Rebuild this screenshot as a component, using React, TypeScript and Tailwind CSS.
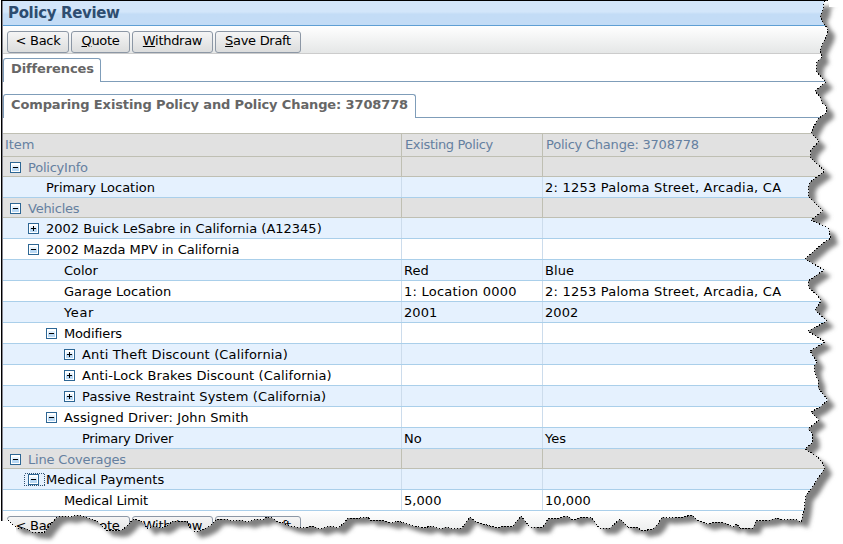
import React from "react";

type Row = {
  label: string;
  level: number;
  toggle?: "plus" | "minus";
  group?: boolean;
  focused?: boolean;
  shade?: boolean;
  before?: string;
  after?: string;
  spacing?: string;
};

const rows: Row[] = [
  { label: "PolicyInfo", level: 0, toggle: "minus", group: true, spacing: "tracking-[-0.22px]" },
  { label: "Primary Location", level: 1, shade: true, after: "2: 1253 Paloma Street, Arcadia, CA" },
  { label: "Vehicles", level: 0, toggle: "minus", group: true, spacing: "tracking-[-0.25px]" },
  { label: "2002 Buick LeSabre in California (A12345)", level: 1, toggle: "plus", shade: true, spacing: "tracking-[0px]" },
  { label: "2002 Mazda MPV in California", level: 1, toggle: "minus", spacing: "tracking-[0px]" },
  { label: "Color", level: 2, shade: true, before: "Red", after: "Blue" },
  { label: "Garage Location", level: 2, before: "1: Location 0000", after: "2: 1253 Paloma Street, Arcadia, CA", spacing: "tracking-[0.04px]" },
  { label: "Year", level: 2, shade: true, before: "2001", after: "2002", spacing: "tracking-[0.6px]" },
  { label: "Modifiers", level: 2, toggle: "minus", spacing: "tracking-[-0.15px]" },
  { label: "Anti Theft Discount (California)", level: 3, toggle: "plus", shade: true, spacing: "tracking-[0.16px]" },
  { label: "Anti-Lock Brakes Discount (California)", level: 3, toggle: "plus", spacing: "tracking-[0.11px]" },
  { label: "Passive Restraint System (California)", level: 3, toggle: "plus", shade: true, spacing: "tracking-[0.13px]" },
  { label: "Assigned Driver: John Smith", level: 2, toggle: "minus", spacing: "tracking-[0.12px]" },
  { label: "Primary Driver", level: 3, shade: true, before: "No", after: "Yes", spacing: "tracking-[-0.24px]" },
  { label: "Line Coverages", level: 0, toggle: "minus", group: true, spacing: "tracking-[-0.17px]" },
  { label: "Medical Payments", level: 1, toggle: "minus", shade: true, focused: true, spacing: "tracking-[0.04px]" },
  { label: "Medical Limit", level: 2, before: "5,000", after: "10,000", spacing: "tracking-[-0.18px]" },
];

const indents = ["pl-[7px]", "pl-[25px]", "pl-[43px]", "pl-[61px]"];

function Toggle({ kind }: { kind: "plus" | "minus" }) {
  return (
    <svg width="11" height="11" viewBox="0 0 11 11" shapeRendering="crispEdges" className="block">
      <rect width="11" height="11" fill="#2d6694" />
      <rect x="1" y="1" width="9" height="9" fill="#ffffff" />
      <rect x="2" y="5" width="7" height="4" fill="#b9d9f5" />
      <rect x="2" y="3" width="7" height="2" fill="#e3f1fd" />
      <rect x="3" y="5" width="5" height="1" fill="#000000" />
      {kind === "plus" && <rect x="5" y="3" width="1" height="5" fill="#000000" />}
    </svg>
  );
}

function Toolbar() {
  const button =
    "h-[22px] shrink-0 rounded-[3px] border border-[#8c97a5] bg-linear-to-b from-[#f5f5f5] to-[#dcdddd] pb-[3px] text-center leading-[17px] tracking-[-0.3px] text-black";
  return (
    <div className="flex h-7 shrink-0 gap-0.5 border-b border-[#cccccc] bg-linear-to-b from-white to-[#e5e7e7] pt-[5px] pl-1">
      <button className={`${button} w-[62px]`}>&lt; Back</button>
      <button className={`${button} w-[59px]`}><u>Q</u>uote</button>
      <button className={`${button} w-[81px]`}><u>W</u>ithdraw</button>
      <button className={`${button} w-[86px]`}><u>S</u>ave Draft</button>
    </div>
  );
}

function Tab({ label, width }: { label: string; width: string }) {
  return (
    <div className="flex h-6 shrink-0">
      <div className={`${width} shrink-0 rounded-t-[3px] border-t border-r border-l border-[#7f9db9] pl-[7px] text-[13px] leading-5 font-bold tracking-[-0.12px] text-[#666666]`}>
        {label}
      </div>
      <div className="grow border-b border-[#7f9db9]" />
    </div>
  );
}

function TableRow({ row }: { row: Row }) {
  const look = row.group
    ? "h-5 border-[#bfbfb3] bg-[#e1e1e1] text-[#6580a0]"
    : `h-[21px] border-[#aacfea] text-black ${row.shade ? "bg-[#e5f1fe]" : "bg-white"}`;
  const divider = row.group ? "border-[#bfbfb3]" : "border-[#ccdcec]";
  const valueSpacing = (text?: string) => (text && text.length > 8 ? "tracking-[0.23px]" : "tracking-[0.05px]");
  return (
    <div className={`grid shrink-0 grid-cols-[398px_141px_1fr] grid-rows-1 border-b leading-[22px] ${look}`}>
      <div className={`flex items-start ${indents[row.level]}`}>
        <span className="relative mt-[5px] mr-[7px] h-[11px] w-[11px]">
          {row.toggle && <Toggle kind={row.toggle} />}
          {row.focused && (
            <svg className="absolute -top-px -left-1" width="21" height="13" shapeRendering="crispEdges">
              <rect x="0.5" y="0.5" width="20" height="12" fill="none" stroke="#2d4f70" strokeDasharray="1 1" />
            </svg>
          )}
        </span>
        <span className={row.spacing ?? ""}>{row.label}</span>
      </div>
      <div className={`border-l pl-0.5 ${divider} ${valueSpacing(row.before)}`}>{row.before}</div>
      <div className={`border-l pl-0.5 ${divider} ${valueSpacing(row.after)}`}>{row.after}</div>
    </div>
  );
}

const rightEdge =
  "828,0 824,2 823,10 820,16 823,23 828,29 827,35 823,43 820,50 822,57 817,62 816,71 822,78 826,82 815,91 820,97 822,103 826,106 827,112 818,119 813,128 811,133 819,141 811,150 810,157 815,162 825,171 810,182 808,188 809,191 808,196 815,203 823,211 811,220 828,228 831,238 823,243 805,259 824,270 808,281 809,288 818,296 821,301 815,310 827,321 808,331 825,342 810,351 817,362 814,366 815,373 818,380 818,388 828,400 820,407 811,412 819,420 808,429 812,433 813,442 805,449 813,454 820,459 825,468 818,478 812,488 806,495 804,510 801,522";
const bottomEdge =
  "797,520 792,519 784,520 777,518 770,520 756,521 753,528 740,528 737,524 733,527 725,523 717,522 707,524 697,520 692,515 683,517 667,518 662,517 658,524 653,529 642,531 637,527 628,527 620,519 610,528 599,528 592,518 582,517 573,520 567,516 560,518 548,519 543,527 530,527 521,516 512,527 504,526 497,528 487,525 476,522 470,517 462,528 453,529 446,527 440,529 431,526 424,528 413,526 404,523 398,521 392,523 381,520 370,520 368,517 360,518 348,518 344,523 338,528 330,526 320,529 312,526 303,528 295,527 290,526 283,523 278,522 272,518 267,517 262,520 257,519 248,522 240,520 233,521 225,519 217,519 210,526 202,530 194,532 190,528 187,521 180,521 173,521 168,525 162,528 154,526 148,529 144,524 141,521 133,519 128,525 122,530 115,531 110,530 106,530 102,526 97,521 88,518 78,515 70,517 62,516 56,518 50,525 44,533 32,532 25,528 17,528 12,524 7,519";
const edge = `${rightEdge} ${bottomEdge}`;

// Torn-paper border with its drop shadow, laid over the window.
function TornEdge() {
  return (
    <svg className="pointer-events-none absolute inset-0" width="843" height="544">
      <defs>
        <filter id="soft" x="-5%" y="-5%" width="110%" height="110%">
          <feGaussianBlur stdDeviation="2" />
        </filter>
        <clipPath id="outside">
          <path clipRule="evenodd" d={`M0,0H843V544H0Z M0,0 L${edge} 7,521 0,521Z`} />
        </clipPath>
      </defs>
      <g clipPath="url(#outside)">
        <rect width="843" height="544" fill="#ffffff" />
        <polygon points={`40,30 ${edge} 40,500`} transform="translate(7 6)" fill="#808080" filter="url(#soft)" />
        <rect x="0" y="521" width="16" height="23" fill="#ffffff" />
        <rect x="829" y="0" width="14" height="7" fill="#ffffff" />
      </g>
      <polyline points={edge} fill="none" stroke="#000000" strokeWidth="1" strokeDasharray="1.4 1.7" shapeRendering="crispEdges" />
    </svg>
  );
}

export default function App() {
  return (
    <div className="relative h-[544px] w-[843px] overflow-hidden bg-white font-['DejaVu_Sans',sans-serif] text-[13px] tracking-[-0.03px] whitespace-nowrap">
      <div className="ml-px flex h-[544px] flex-col border-t border-l border-black">
        <div className="flex grow flex-col border-l border-[#85858f]">
          <div className="h-[25px] shrink-0 border-b border-[#5f9fd4] bg-linear-to-b from-[#d3e6fa] from-45% to-[#c3dcf6] to-55% pl-[5px] text-[15px] leading-6 font-bold tracking-[-0.35px] text-[#2e4d70]">
            Policy Review
          </div>
          <Toolbar />
          <div className="h-1 shrink-0" />
          <Tab label="Differences" width="w-[98px]" />
          <div className="h-3 shrink-0" />
          <Tab label="Comparing Existing Policy and Policy Change: 3708778" width="w-[413px]" />
          <div className="mt-[15px] grid h-6 shrink-0 grid-cols-[398px_141px_1fr] border-t border-b border-[#bfbfb3] bg-[#e1e1e1] leading-[22px] text-[#6580a0]">
            <div className="pl-0.5">Item</div>
            <div className="border-l border-[#bfbfb3] pl-[3px] tracking-[-0.34px]">Existing Policy</div>
            <div className="border-l border-[#bfbfb3] pl-[3px] tracking-[-0.22px]">Policy Change: 3708778</div>
          </div>
          {rows.map((row) => <TableRow key={row.label} row={row} />)}
          <Toolbar />
        </div>
      </div>
      <TornEdge />
    </div>
  );
}
